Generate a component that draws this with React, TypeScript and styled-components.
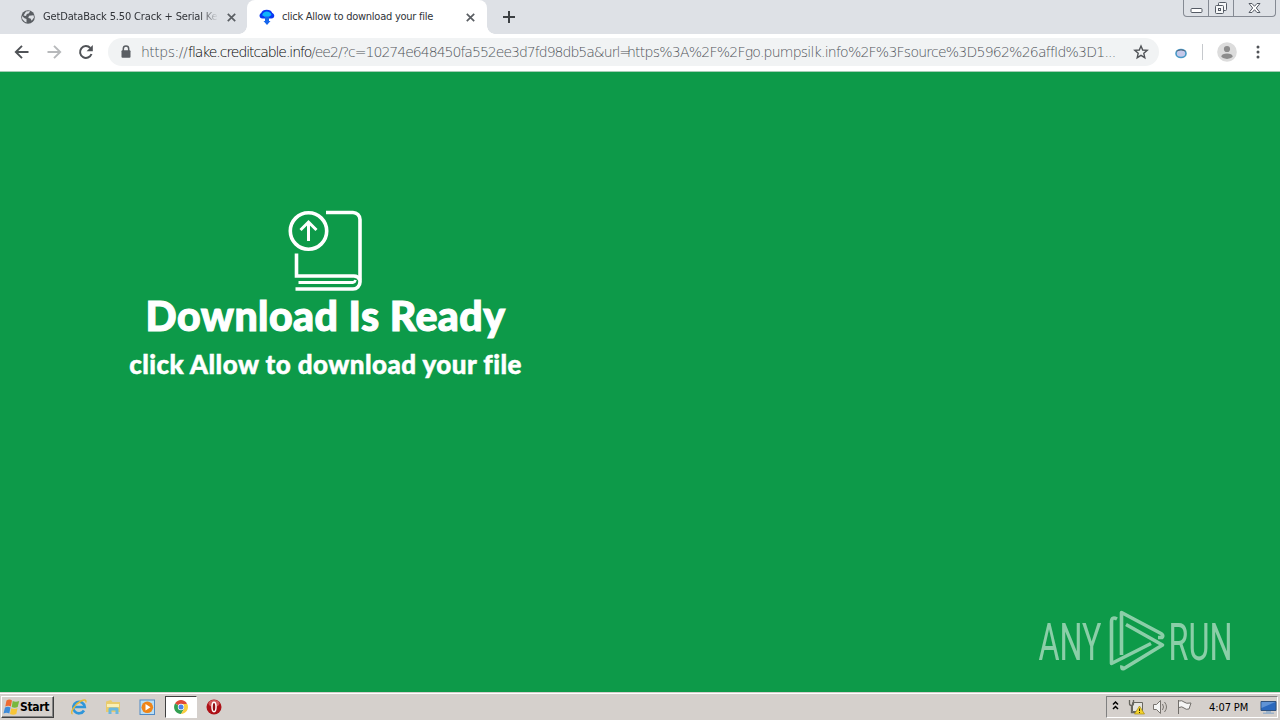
import React from 'react'
import styled, { createGlobalStyle } from 'styled-components'

const GlobalStyle = createGlobalStyle`
  body {
    margin: 0;
    overflow: hidden;
    font-family: 'DejaVu Sans Condensed', 'DejaVu Sans', sans-serif;
  }
  * {
    box-sizing: border-box;
  }
  svg {
    display: block;
    flex: none;
  }
`

const SDesktop = styled.div`
  width: 1280px;
  height: 720px;
  display: flex;
  flex-direction: column;
`

const STabStrip = styled.div`
  height: 34px;
  flex: none;
  display: flex;
  background: #dee1e6;
`

const STab = styled.div<{ $active?: boolean }>`
  position: relative;
  width: ${p => (p.$active ? 240 : 247)}px;
  height: 34px;
  padding: ${p => (p.$active ? '0 12px' : '0 11px 0 20px')};
  display: flex;
  align-items: center;
  background: ${p => (p.$active ? '#fff' : 'transparent')};
  border-radius: 8px 8px 0 0;

  &::before,
  &::after {
    content: '';
    display: ${p => (p.$active ? 'block' : 'none')};
    position: absolute;
    bottom: 0;
    width: 8px;
    height: 8px;
  }
  &::before {
    left: -8px;
    background: radial-gradient(circle at 0 0, transparent 7.5px, #fff 8px);
  }
  &::after {
    right: -8px;
    background: radial-gradient(circle at 100% 0, transparent 7.5px, #fff 8px);
  }
`

const STabTitle = styled.div<{ $fade?: boolean; $spacing: number }>`
  flex: 1;
  margin-left: 7px;
  margin-right: ${p => (p.$fade ? 9 : 20)}px;
  overflow: hidden;
  white-space: nowrap;
  font-family: 'DejaVu Sans', sans-serif;
  font-stretch: condensed;
  font-size: 11px;
  line-height: 16px;
  letter-spacing: ${p => p.$spacing}px;
  color: #303338;
  mask-image: ${p => (p.$fade ? 'linear-gradient(90deg, #000 90%, transparent)' : 'none')};
`

const SNewTab = styled.div`
  margin: 10px 0 0 15px;
`

const SWindowButtons = styled.div`
  margin-left: auto;
  margin-right: 4px;
  width: 93px;
  height: 17px;
  display: grid;
  grid-template-columns: 25px 25px 1fr;
  border: 1px solid #858a93;
  border-top: 0;
  border-radius: 0 0 4px 4px;
`

const SWindowButton = styled.div`
  display: flex;
  align-items: center;
  justify-content: center;
  border-right: 1px solid #858a93;

  &:last-child {
    border-right: 0;
  }
`

const SToolbar = styled.div`
  height: 38px;
  flex: none;
  padding: 4px 14px 5px 14px;
  display: flex;
  align-items: center;
  background: #fff;
  border-bottom: 1px solid #a5cdb5;
`

const SNavButtons = styled.div`
  width: 94px;
  display: flex;
  gap: 16px;
`

const SOmnibox = styled.div`
  width: 1051px;
  height: 28px;
  padding: 0 10px 0 10px;
  display: flex;
  align-items: center;
  background: #f1f3f4;
  border-radius: 14px;
`

const SUrl = styled.div`
  flex: 1;
  margin-left: 7px;
  display: flex;
  white-space: pre;
  font-family: 'DejaVu Sans', sans-serif;
  font-weight: 200;
  font-size: 14px;
  line-height: 20px;
  color: #50545a;
`

const SUrlPart = styled.span<{ $width: number; $spacing: number; $host?: boolean }>`
  width: ${p => p.$width}px;
  letter-spacing: ${p => p.$spacing}px;
  color: ${p => (p.$host ? '#000' : 'inherit')};
`

const SToolbarRight = styled.div`
  flex: 1;
  margin-left: 14px;
  display: flex;
  align-items: center;
  justify-content: space-between;
`

const SDivider = styled.div`
  width: 1px;
  height: 16px;
  background: #c6c9cd;
`

const SPage = styled.main`
  flex: 1;
  display: flex;
  justify-content: space-between;
  background: #0d9a49;
`

const SMessage = styled.section`
  width: 651px;
  padding-top: 135px;
  display: flex;
  flex-direction: column;
  align-items: center;
  color: #fff;
  font-family: Lato, sans-serif;
  white-space: nowrap;
`

const STitle = styled.h1`
  margin: 0;
  font-size: 41px;
  line-height: 49px;
  font-weight: 900;
  letter-spacing: 0.45px;
  -webkit-text-stroke: 1.1px #fff;
`

const SSubtitle = styled.h2`
  margin: 8px 0 0;
  font-size: 26px;
  line-height: 32px;
  font-weight: 900;
  letter-spacing: 0.45px;
  -webkit-text-stroke: 0.5px #fff;
`

const SWatermark = styled.div`
  align-self: flex-end;
  margin: 0 32px 16px 0;
`

const STaskbar = styled.footer`
  height: 28px;
  flex: none;
  padding: 2px 2px 1px 1px;
  display: flex;
  align-items: center;
  background: #d5d0cc;
  border-top: 1px solid #d5d0cc;
  box-shadow: inset 0 1px #fff;
`

const SStart = styled.div`
  width: 53px;
  height: 22px;
  padding-left: 1px;
  display: flex;
  align-items: center;
  border: 1px solid;
  border-color: #fff #404040 #404040 #fff;
  box-shadow: inset -1px -1px #858585;
  font-family: 'DejaVu Sans', sans-serif;
  font-stretch: condensed;
  font-weight: 700;
  font-size: 12px;
  letter-spacing: -0.3px;
  color: #000;
`

const STasks = styled.div`
  margin-left: 8px;
  display: flex;
`

const STask = styled.div<{ $active?: boolean }>`
  width: ${p => (p.$active ? 32 : 34)}px;
  height: 22px;
  margin-left: ${p => (p.$active ? 1 : 0)}px;
  display: flex;
  align-items: center;
  justify-content: center;
  background: ${p => (p.$active ? '#fff' : 'transparent')};
  border: ${p => (p.$active ? '1px solid' : '0')};
  border-color: #404040 #fff #fff #404040;
`

const STray = styled.div`
  width: 172px;
  height: 22px;
  margin-left: auto;
  padding-left: 5px;
  display: flex;
  align-items: center;
  border: 1px solid;
  border-color: #808080 #fff #fff #808080;
`

const SClock = styled.div`
  width: 46px;
  margin-left: 11px;
  margin-right: 8px;
  white-space: nowrap;
  font-family: 'DejaVu Sans', sans-serif;
  font-stretch: condensed;
  font-size: 11px;
  letter-spacing: -0.1px;
  color: #000;
`

const GlobeIcon = () => (
  <svg width="16" height="16" viewBox="0 0 16 16">
    <circle cx="8" cy="8" r="6.8" fill="#5a5e63" />
    <path d="M2 7 4.5 9.2 6.5 10v3.5L4.8 12.8 2.2 10zM6 2.5 10 2l-1 2.3-2.2.8L6 7 3.5 6.5zM9 6.8l4.5-.6.5 2.2-2.3 3.3L10.5 9.5 8.3 9z" fill="#dee1e6" />
  </svg>
)

const CloudDownIcon = () => (
  <svg width="16" height="16" viewBox="0 0 16 16">
    <path d="M3.5 9.500C.2 9.500-.5 5.500 2.200 4 3-.5 12.500-.5 13.300 4 16.500 5.500 15.500 9.500 12.500 9.500z" fill="#0837f2" />
    <path d="M3.200 6.200C4 1.300 11.500 1.300 12.500 6L9.700 8H6.200z" fill="#0fb4fa" />
    <path d="M6 7.500h4V12h1.500L8 16l-3.500-4H6z" fill="#1666ed" />
  </svg>
)

const CloseIcon = () => (
  <svg width="9" height="9" viewBox="0 0 9 9">
    <path d="m.8.8 7.4 7.4m0-7.4L.8 8.2" stroke="#5a5e63" strokeWidth="1.7" />
  </svg>
)

interface IArrowProps {
  color: string
  flip?: boolean
}

const ArrowIcon = (props: IArrowProps) => (
  <svg width="16" height="16" viewBox="0 0 16 16">
    <path
      d="M14.5 8H2.3M8 1.8 1.8 8 8 14.2"
      transform={props.flip ? 'translate(16 0) scale(-1 1)' : undefined}
      fill="none"
      stroke={props.color}
      strokeWidth="1.9"
    />
  </svg>
)

const ReloadIcon = () => (
  <svg width="16" height="16" viewBox="0 0 16 16">
    <path d="M13.5 10A5.9 5.9 0 1 1 12.3 4" fill="none" stroke="#505357" strokeWidth="2" />
    <path d="M14.8 1v6.2H8.6z" fill="#505357" />
  </svg>
)

const LockIcon = () => (
  <svg width="16" height="16" viewBox="0 0 16 16">
    <path d="M5.3 7V4.7a2.7 2.7 0 0 1 5.4 0V7" fill="none" stroke="#5a5e63" strokeWidth="1.5" />
    <rect x="3.5" y="6.2" width="9" height="7.6" rx="1" fill="#5a5e63" />
  </svg>
)

const StarIcon = () => (
  <svg width="16" height="16" viewBox="0 0 16 16">
    <path d="m8 2 1.7 4 4.5.4-3.4 2.9 1 4.4L8 11.4l-3.8 2.3 1-4.4-3.4-2.9L6.3 6z" fill="none" stroke="#505357" strokeWidth="1.4" />
  </svg>
)

const ExtensionIcon = () => (
  <svg width="16" height="16" viewBox="0 0 16 16">
    <ellipse cx="8" cy="9.500" rx="5" ry="4" fill="#c5c8e9" stroke="#4798c6" strokeWidth="1.6" />
    <path d="M3.500 7q4.500-2.400 9 0" fill="none" stroke="#59697e" />
  </svg>
)

const ProfileIcon = () => (
  <svg width="20" height="20" viewBox="0 0 20 20">
    <circle cx="10" cy="10" r="9.8" fill="#dcdcdc" />
    <circle cx="10" cy="7" r="3.1" fill="#8c8c8c" />
    <ellipse cx="10" cy="14.2" rx="5.5" ry="2.7" fill="#8c8c8c" />
  </svg>
)

const MenuIcon = () => (
  <svg width="16" height="16" viewBox="0 0 16 16" fill="#505357">
    <circle cx="8" cy="3" r="1.5" />
    <circle cx="8" cy="8" r="1.5" />
    <circle cx="8" cy="13" r="1.5" />
  </svg>
)

const BookIcon = () => (
  <svg width="76" height="84" viewBox="0 0 76 84" fill="none" stroke="#fff" strokeWidth="3.6">
    <circle cx="20.500" cy="24" r="18.2" />
    <path d="M20.500 34V16M12.500 23l8-8 8 8" strokeWidth="3" />
    <path d="M38 5.500H65a7 7 0 0 1 7 7V75a7 7 0 0 1-7 7H7.500" />
    <path d="M8.500 46.500v22.500H66q4 0 6 4" />
    <path d="M10.500 75.500H65q2-.5 2.500-2.500" strokeWidth="2.8" />
  </svg>
)

const AnyRunLogo = () => (
  <svg width="210" height="70" viewBox="1038 606 210 70">
    <g fill="#fff" opacity=".52" fontFamily="Roboto, sans-serif" fontSize="52">
      <text x="1038.500" y="660" textLength="63" lengthAdjust="spacingAndGlyphs">ANY</text>
      <text x="1168.500" y="660" textLength="64" lengthAdjust="spacingAndGlyphs">RUN</text>
    </g>
    <path
      d="M1117 619q-5.500-3-5.500 3V663.500L1151 643.500M1121.500 655V612.500L1161 633.500q3 2 1 4h-4M1126 624.500 1162.500 645 1124 668.500q-3 1-2-3"
      fill="none"
      stroke="#fff"
      strokeWidth="3.600"
      opacity=".52"
      strokeLinejoin="round"
    />
  </svg>
)

const WindowsIcon = () => (
  <svg width="17" height="17" viewBox="0 0 17 17">
    <path d="M3.500 1.500q3-2 5.500 0L7.800 7.500q-2.500-1.500-5.500 0z" fill="#ee6a31" />
    <path d="M9.700 2q3 1.500 6.500 0l-1.500 6q-3 1.500-6 0z" fill="#78b83e" />
    <path d="M2 8.500q3-1.500 5.500 0L6.300 14.500q-2.800-1.500-5.800 0z" fill="#3e8bd9" />
    <path d="M8.300 9.200q3 1.500 6.200 0L13.300 15q-3 1.500-6.300 0z" fill="#f8c535" />
  </svg>
)

const ExplorerIcon = () => (
  <svg width="18" height="18" viewBox="0 0 18 18" fill="none">
    <path d="M14 12.500A5.800 5.800 0 1 1 14.800 9H5" stroke="#2f96da" strokeWidth="2.600" />
    <path d="M2.500 16C-.5 15 5 6 11 3q5.500-2.700 5 1.500" stroke="#e8b936" strokeWidth="1.400" />
  </svg>
)

const FolderIcon = () => (
  <svg width="18" height="18" viewBox="0 0 18 18">
    <path d="M2 3.500 7 2l1.500 2H16v10H2z" fill="#e9cb6c" />
    <path d="M3 6h12v3H3z" fill="#fbefb4" />
    <path d="M4.500 16v-5q0-1.500 1.500-1.500h7q1.500 0 1.500 1.500v5h-3v-3.500h-4V16z" fill="#69b8e0" />
  </svg>
)

const PlayerIcon = () => (
  <svg width="17" height="17" viewBox="0 0 17 17">
    <rect x="1" y="1" width="14.500" height="14.500" fill="#b9def5" stroke="#508ac6" />
    <circle cx="8.300" cy="8.300" r="5.800" fill="#ef8518" />
    <path d="m6.500 5 5 3.300-5 3.300z" fill="#fff" />
  </svg>
)

const ChromeIcon = () => (
  <svg width="14" height="14" viewBox="0 0 14 14">
    <path d="M7 7 1 3.500A7 7 0 0 1 13 3.500z" fill="#df4937" />
    <path d="M7 7 1 3.500A7 7 0 0 0 7 14l3-5z" fill="#32a052" />
    <path d="M7 4h6.300A7 7 0 0 1 7 14l3-5z" fill="#f9cd3e" />
    <circle cx="7" cy="7" r="3.200" fill="#fff" />
    <circle cx="7" cy="7" r="2.500" fill="#4b82e8" />
  </svg>
)

const OperaIcon = () => (
  <svg width="16" height="16" viewBox="0 0 16 16">
    <circle cx="8" cy="8" r="7.500" fill="#ad1117" />
    <ellipse cx="8" cy="4.500" rx="5.500" ry="3.500" fill="#d2595a" />
    <ellipse cx="8" cy="8" rx="2" ry="4.700" fill="#931015" stroke="#fff" strokeWidth="1.500" />
  </svg>
)

const TrayIcons = () => (
  <svg width="86" height="18" viewBox="0 0 86 18" fill="none">
    <path d="m1 6.500 2.500-2.500L6 6.500M1 11 3.500 8.500 6 11" stroke="#000" strokeWidth="1.500" />
    <path d="M20.500 4.500h10v9h-10z" fill="#e4e4df" stroke="#67665f" />
    <path d="M17.500 2v3.500q0 2 2 2t2-2V2m-2 5v7.500h4" stroke="#66655f" strokeWidth="1.300" />
    <path d="m27.500 8 5 8h-10z" fill="#f4d229" stroke="#a78d15" strokeWidth=".7" />
    <path d="M27.500 10.500v2.500m0 1v1" stroke="#352d00" />
    <path d="M41.500 6.500h3l4-4v13l-4-4h-3z" fill="#f5f5f4" stroke="#77736e" />
    <path d="M50.500 6q2 3 0 6m2-8q4 5 0 10" stroke="#77736e" />
    <path d="M66.500 2v14M67 3q3-1 5 1t7 1l-2 6q-3 1-5-1t-5-.5" fill="#f5f5f4" stroke="#716e6a" />
  </svg>
)

const MonitorIcon = () => (
  <svg width="17" height="16" viewBox="0 0 17 16">
    <path d="M1 2.500h15v9H1z" fill="#2b68bd" stroke="#31527d" />
    <path d="M1.500 3h14L1.500 9z" fill="#6093d5" />
    <path d="M6 12h5v1.500h3V15H3v-1.500h3z" fill="#9bb2ca" />
  </svg>
)

const BrowserTabs = () => (
  <STabStrip>
    <STab>
      <GlobeIcon />
      <STabTitle $fade $spacing={-0.15}>GetDataBack 5.50 Crack + Serial Key</STabTitle>
      <CloseIcon />
    </STab>
    <STab $active>
      <CloudDownIcon />
      <STabTitle $spacing={-0.25}>click Allow to download your file</STabTitle>
      <CloseIcon />
    </STab>
    <SNewTab>
      <svg width="14" height="14" viewBox="0 0 14 14">
        <path d="M1 7h12M7 1v12" stroke="#3c4043" strokeWidth="2" />
      </svg>
    </SNewTab>
    <SWindowButtons>
      <SWindowButton>
        <svg width="13" height="17" viewBox="0 0 13 17">
          <rect x="1" y="8.500" width="11" height="4" rx="1" fill="#fff" stroke="#555b65" />
        </svg>
      </SWindowButton>
      <SWindowButton>
        <svg width="14" height="17" viewBox="0 0 14 17" fill="#f6f7f8" stroke="#555b65">
          <rect x="4.500" y="2.500" width="8" height="8" rx="1" />
          <rect x="1.500" y="5.500" width="8" height="8" rx="1" />
          <rect x="4.500" y="8.500" width="2" height="2" />
        </svg>
      </SWindowButton>
      <SWindowButton>
        <svg width="13" height="17" viewBox="0 0 13 17">
          <path d="M1 3.500h3l2.500 2.800L9 3.500h3L8.300 8l3.700 4.500H9L6.500 9.700 4 12.500H1L4.700 8z" fill="#fff" stroke="#555b65" />
        </svg>
      </SWindowButton>
    </SWindowButtons>
  </STabStrip>
)

const BrowserToolbar = () => (
  <SToolbar>
    <SNavButtons>
      <ArrowIcon color="#505357" />
      <ArrowIcon color="#b7b9bb" flip />
      <ReloadIcon />
    </SNavButtons>
    <SOmnibox>
      <LockIcon />
      <SUrl>
        <SUrlPart $width={47} $spacing={-0.5}>https://</SUrlPart>
        <SUrlPart $width={123} $spacing={-1.05} $host>flake.creditcable.info</SUrlPart>
        <SUrlPart $width={316} $spacing={-0.98}>/ee2/?c=10274e648450fa552ee3d7fd98db5a&amp;url=</SUrlPart>
        <SUrlPart $width={492} $spacing={-0.76}>https%3A%2F%2Fgo.pumpsilk.info%2F%3Fsource%3D5962%26affId%3D1...</SUrlPart>
      </SUrl>
      <StarIcon />
    </SOmnibox>
    <SToolbarRight>
      <ExtensionIcon />
      <SDivider />
      <ProfileIcon />
      <MenuIcon />
    </SToolbarRight>
  </SToolbar>
)

const App = () => {
  return (
    <SDesktop>
      <GlobalStyle />
      <BrowserTabs />
      <BrowserToolbar />
      <SPage>
        <SMessage>
          <BookIcon />
          <STitle>Download Is Ready</STitle>
          <SSubtitle>click Allow to download your file</SSubtitle>
        </SMessage>
        <SWatermark>
          <AnyRunLogo />
        </SWatermark>
      </SPage>
      <STaskbar>
        <SStart>
          <WindowsIcon />
          Start
        </SStart>
        <STasks>
          <STask><ExplorerIcon /></STask>
          <STask><FolderIcon /></STask>
          <STask><PlayerIcon /></STask>
          <STask $active><ChromeIcon /></STask>
          <STask><OperaIcon /></STask>
        </STasks>
        <STray>
          <TrayIcons />
          <SClock>4:07 PM</SClock>
          <MonitorIcon />
        </STray>
      </STaskbar>
    </SDesktop>
  )
}

export default App
